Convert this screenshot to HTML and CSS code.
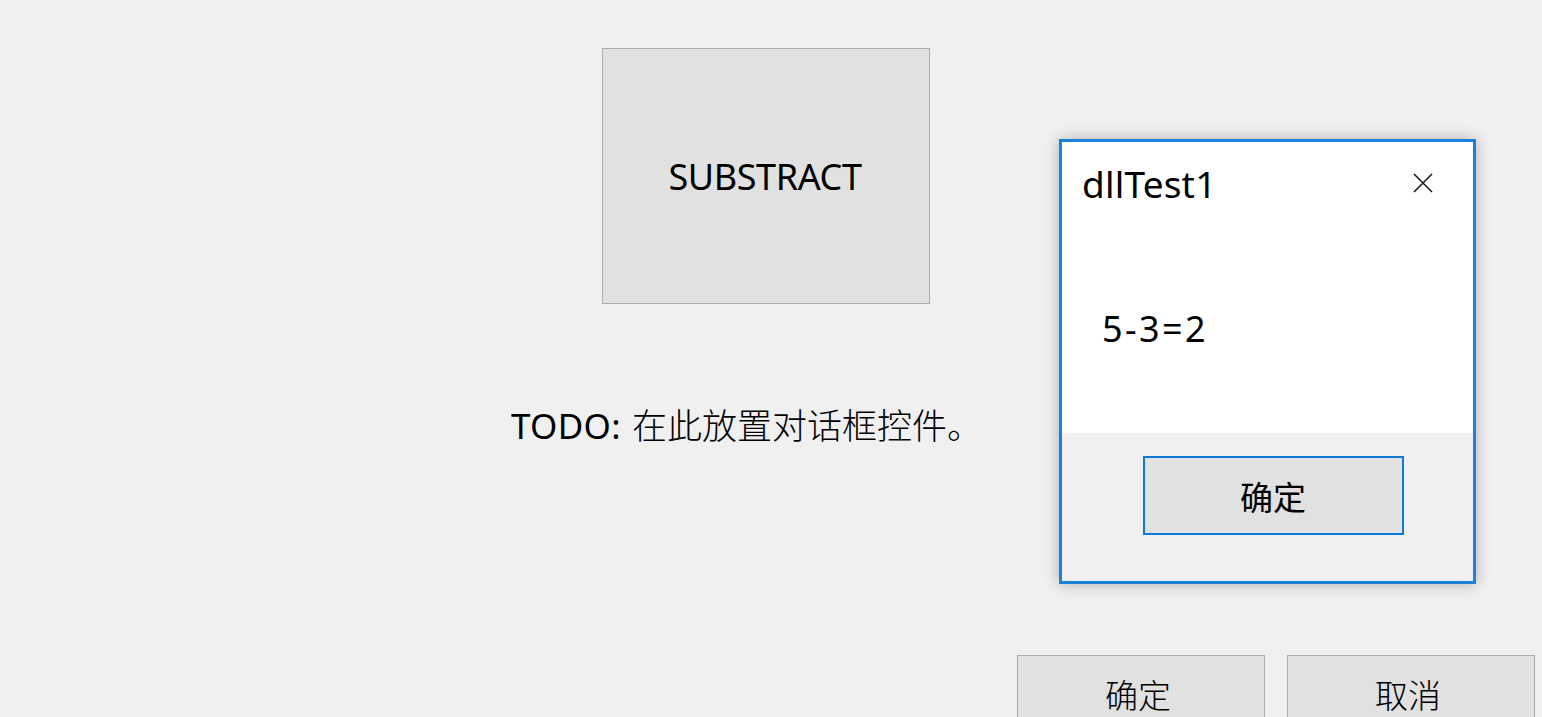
FILE: index.html
```html
<!DOCTYPE html>
<html lang="zh-CN">
<head>
<meta charset="utf-8">
<title>dllTest</title>
<link rel="stylesheet" href="styles.css">
</head>
<body>
<div class="page">
  <div class="top-row">
    <button class="win-btn big-btn">SUBSTRACT</button>
  </div>
  <p class="todo"><span class="todo-latin">TODO:</span> <span class="todo-cjk">在此放置对话框控件。</span></p>
  <div class="footer-row">
    <button class="win-btn foot-btn">确定</button>
    <button class="win-btn foot-btn">取消</button>
  </div>
</div>

<div class="msgbox">
  <div class="msg-title">
    <span class="msg-title-text">dllTest1</span>
    <span class="msg-close">
      <svg width="20" height="20" viewBox="0 0 20 20"><path d="M1 1 L19 19 M19 1 L1 19" stroke="#1a1a1a" stroke-width="1.6" fill="none"/></svg>
    </span>
  </div>
  <div class="msg-body">5-3=2</div>
  <div class="msg-footer">
    <button class="msg-ok">确定</button>
  </div>
</div>
</body>
</html>
```
FILE: styles.css
```css
html, body {
  margin: 0;
  padding: 0;
  width: 1542px;
  height: 717px;
  overflow: hidden;
  background: #f0f0f0;
  font-family: "Noto Sans", "Noto Sans CJK SC", sans-serif;
  color: #000;
}

.page {
  display: flex;
  flex-direction: column;
  height: 717px;
}

.top-row {
  padding-left: 602px;
  padding-top: 48px;
}

.win-btn {
  background: #e1e1e1;
  border: 1px solid #adadad;
  margin: 0;
  padding: 0;
  color: #000;
  display: flex;
  justify-content: center;
}

.big-btn {
  width: 328px;
  height: 256px;
  align-items: center;
  font-family: "Noto Sans", sans-serif;
  font-size: 36px;
  letter-spacing: -0.4px;
  padding-right: 2px;
}

.todo {
  margin: 97px 0 0 511px;
  font-size: 35px;
  line-height: 46px;
  white-space: nowrap;
}

.todo-latin {
  font-family: "Noto Sans", sans-serif;
  letter-spacing: 0.3px;
}

.todo-cjk {
  font-family: "Noto Sans CJK SC", sans-serif;
  font-weight: 300;
  font-size: 35px;
  letter-spacing: 0;
  margin-left: 2px;
}

.footer-row {
  margin-top: auto;
  display: flex;
  justify-content: flex-end;
  gap: 22px;
  padding-right: 7px;
  height: 62px;
}

.foot-btn {
  width: 248px;
  height: 80px;
  font-family: "Noto Sans CJK SC", sans-serif;
  font-weight: 300;
  font-size: 33px;
  padding-top: 14px;
  padding-right: 6px;
}

.msgbox {
  position: absolute;
  left: 1059px;
  top: 139px;
  width: 411px;
  height: 439px;
  border: 3px solid #1a83d8;
  background: #fff;
  box-shadow: 0 0 14px rgba(0, 0, 0, 0.28);
  display: flex;
  flex-direction: column;
}

.msg-title {
  display: flex;
  align-items: center;
  justify-content: space-between;
  height: 82px;
  padding: 0 40px 0 20px;
}

.msg-title-text {
  font-family: "Noto Sans", sans-serif;
  font-size: 37px;
  letter-spacing: 0.2px;
}

.msg-close {
  display: flex;
}

.msg-body {
  flex: 1;
  padding: 85px 0 0 40px;
  font-family: "Noto Sans", sans-serif;
  font-size: 36px;
  line-height: 40px;
  letter-spacing: 2.4px;
}

.msg-footer {
  background: #f0f0f0;
  height: 148px;
  display: flex;
  justify-content: center;
  align-items: flex-start;
  padding-top: 23px;
  box-sizing: border-box;
}

.msg-ok {
  width: 261px;
  height: 79px;
  margin: 0 0 0 11px;
  padding: 0;
  background: #e1e1e1;
  border: 2px solid #0a7ad6;
  font-family: "Noto Sans CJK SC", sans-serif;
  font-size: 33px;
  color: #000;
}
```
